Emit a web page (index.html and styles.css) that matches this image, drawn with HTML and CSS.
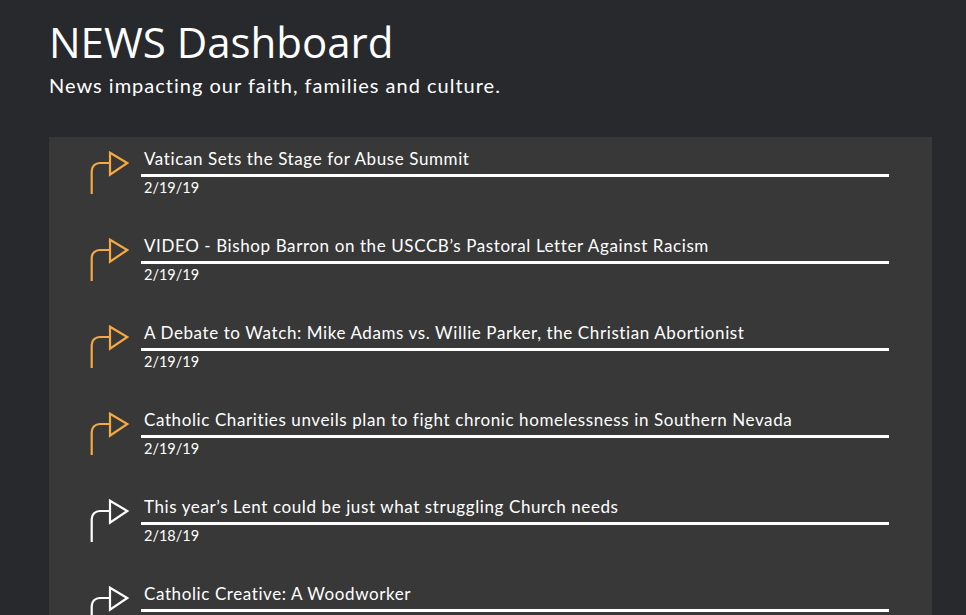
FILE: index.html
```html
<!DOCTYPE html>
<html>
<head>
  <meta charset="utf-8">
  <title>NEWS Dashboard</title>
  <link rel="stylesheet" href="styles.css">
</head>
<body>
  <div class="header">
    <h1 class="title">NEWS Dashboard</h1>
    <div class="subtitle">News impacting our faith, families and culture.</div>
  </div>
  <div class="panel">
    <div class="item new">
      <svg class="icon" viewBox="0 0 42 46" width="42" height="46"><path d="M3.7 44V21A8 8 0 0 1 11.7 13H22M22 2.7L39.3 13L22 24.7Z"/></svg>
      <div class="content">
        <div class="headline">Vatican Sets the Stage for Abuse Summit</div>
        <div class="date">2/19/19</div>
      </div>
    </div>
    <div class="item new">
      <svg class="icon" viewBox="0 0 42 46" width="42" height="46"><path d="M3.7 44V21A8 8 0 0 1 11.7 13H22M22 2.7L39.3 13L22 24.7Z"/></svg>
      <div class="content">
        <div class="headline">VIDEO - Bishop Barron on the USCCB’s Pastoral Letter Against Racism</div>
        <div class="date">2/19/19</div>
      </div>
    </div>
    <div class="item new">
      <svg class="icon" viewBox="0 0 42 46" width="42" height="46"><path d="M3.7 44V21A8 8 0 0 1 11.7 13H22M22 2.7L39.3 13L22 24.7Z"/></svg>
      <div class="content">
        <div class="headline">A Debate to Watch: Mike Adams vs. Willie Parker, the Christian Abortionist</div>
        <div class="date">2/19/19</div>
      </div>
    </div>
    <div class="item new">
      <svg class="icon" viewBox="0 0 42 46" width="42" height="46"><path d="M3.7 44V21A8 8 0 0 1 11.7 13H22M22 2.7L39.3 13L22 24.7Z"/></svg>
      <div class="content">
        <div class="headline">Catholic Charities unveils plan to fight chronic homelessness in Southern Nevada</div>
        <div class="date">2/19/19</div>
      </div>
    </div>
    <div class="item">
      <svg class="icon" viewBox="0 0 42 46" width="42" height="46"><path d="M3.7 44V21A8 8 0 0 1 11.7 13H22M22 2.7L39.3 13L22 24.7Z"/></svg>
      <div class="content">
        <div class="headline">This year’s Lent could be just what struggling Church needs</div>
        <div class="date">2/18/19</div>
      </div>
    </div>
    <div class="item">
      <svg class="icon" viewBox="0 0 42 46" width="42" height="46"><path d="M3.7 44V21A8 8 0 0 1 11.7 13H22M22 2.7L39.3 13L22 24.7Z"/></svg>
      <div class="content">
        <div class="headline">Catholic Creative: A Woodworker</div>
        <div class="date">2/18/19</div>
      </div>
    </div>
  </div>
</body>
</html>
```

FILE: styles.css
```css
html, body {
  margin: 0;
  background-color: #28292d;
  color: #ffffff;
  height: 100%;
  overflow: hidden;
}
.header {
  padding: 14px 49px 0 49px;
}
.title {
  margin: 0;
  font-family: "Open Sans", sans-serif;
  font-weight: 400;
  font-size: 42px;
  line-height: 56px;
}
.subtitle {
  font-family: "Lato", sans-serif;
  font-size: 20px;
  line-height: 26px;
  letter-spacing: 1px;
  margin-top: 2px;
}
.panel {
  margin: 39px 34px 0 49px;
  background-color: #383838;
  padding: 11px 43px 0 39px;
  height: 600px;
}
.item {
  display: flex;
  gap: 11px;
  height: 87px;
}
.icon {
  flex: none;
  margin-top: 2px;
  fill: none;
  stroke: #ffffff;
  stroke-width: 2.2;
}
.item.new .icon {
  stroke: #f5a940;
}
.content {
  flex: 1;
  font-family: "Lato", sans-serif;
}
.headline {
  font-size: 17px;
  line-height: 22px;
  letter-spacing: 0.6px;
  padding: 0 3px 4px 3px;
  border-bottom: 3px solid #ffffff;
}
.date {
  font-size: 14.5px;
  line-height: 21px;
  padding: 0 3px;
}
```
